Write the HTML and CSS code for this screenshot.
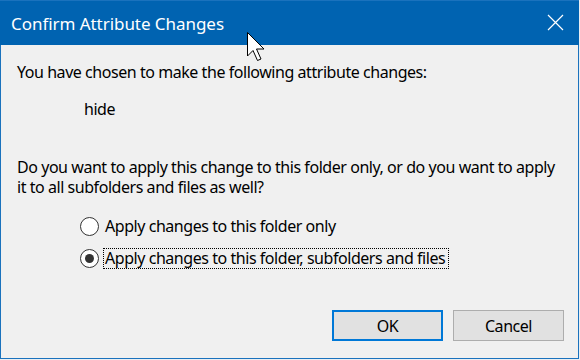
FILE: index.html
```html
<!DOCTYPE html>
<html>
<head>
<meta charset="utf-8">
<link rel="stylesheet" href="styles.css">
</head>
<body>
<div class="window">
  <div class="titlebar">
    <span class="title">Confirm Attribute Changes</span>
    <span class="close">
      <svg width="17" height="17" viewBox="0 0 17 17"><path d="M1 1 L16 16 M16 1 L1 16" stroke="#ffffff" stroke-width="1.2" fill="none"/></svg>
    </span>
  </div>
  <div class="content">
    <p class="line first">You have chosen to make the following attribute changes:</p>
    <p class="line attr">hide</p>
    <p class="line question">Do you want to apply this change to this folder only, or do you want to apply<br>it to all subfolders and files as well?</p>
    <div class="options">
      <div class="option">
        <span class="radio"></span>
        <span class="label">Apply changes to this folder only</span>
      </div>
      <div class="option">
        <span class="radio checked"><span class="dot"></span></span>
        <span class="label focused">Apply changes to this folder, subfolders and files</span>
      </div>
    </div>
    <div class="buttons">
      <button class="btn default">OK</button>
      <button class="btn">Cancel</button>
    </div>
  </div>
  <svg class="cursor" width="20" height="30" viewBox="0 0 20 30"><path d="M0.5 0.5 L0.5 24 L6 18.5 L10.5 28.5 L14 27 L9.5 17 L17 17 Z" fill="#ffffff" stroke="#000000" stroke-width="1" stroke-linejoin="miter"/></svg>
</div>
</body>
</html>
```
FILE: styles.css
```css
html, body {
  margin: 0;
  padding: 0;
  background: #e9eef3;
}
body {
  width: 580px;
  height: 360px;
  overflow: hidden;
  font-family: "Noto Sans", "Open Sans", sans-serif;
}
.window {
  position: relative;
  width: 577px;
  height: 358px;
  border: 1px solid #1a72bd;
  border-top: none;
  background: #f0f0f0;
  display: flex;
  flex-direction: column;
}
.titlebar {
  height: 45px;
  background: #0063b1;
  display: flex;
  align-items: center;
  justify-content: space-between;
  padding: 0 15px 0 11px;
  margin: 0 -1px;
  border-top: 1px solid #1a72bd;
  box-sizing: border-box;
}
.title {
  color: #ffffff;
  font-size: 17px;
  letter-spacing: -0.05px;
  line-height: 24px;
  padding-top: 2px;
}
.close {
  display: flex;
  margin-top: -1px;
}
.content {
  padding: 17px 0 0 16px;
  display: flex;
  flex-direction: column;
  color: #000000;
  font-size: 16px;
  letter-spacing: -0.45px;
}
.line {
  margin: 0;
  line-height: 20px;
  white-space: nowrap;
}
.attr {
  margin-top: 17px;
  margin-left: 67px;
}
.question {
  margin-top: 38px;
}
.options {
  margin-top: 19px;
  margin-left: 63px;
  display: flex;
  flex-direction: column;
  gap: 11px;
}
.option {
  display: flex;
  align-items: center;
  height: 21px;
}
.radio {
  width: 17px;
  height: 17px;
  border: 1px solid #333333;
  border-radius: 50%;
  background: #ffffff;
  display: flex;
  align-items: center;
  justify-content: center;
  margin-right: 4px;
}
.dot {
  width: 9px;
  height: 9px;
  border-radius: 50%;
  background: #333333;
}
.label {
  line-height: 19px;
  border: 1px dotted transparent;
  padding: 0 3px 0 1px;
  white-space: nowrap;
}
.label.focused {
  border-color: #000000;
}
.buttons {
  margin-top: 41px;
  margin-right: 14px;
  display: flex;
  justify-content: flex-end;
  gap: 10px;
}
.btn {
  width: 111px;
  height: 31px;
  box-sizing: border-box;
  background: #e1e1e1;
  border: 1px solid #adadad;
  font-family: "Noto Sans", "Open Sans", sans-serif;
  font-size: 16px;
  letter-spacing: -0.45px;
  color: #000000;
  padding: 0;
  margin: 0;
}
.btn.default {
  border: 2px solid #0078d7;
}
.cursor {
  position: absolute;
  left: 246px;
  top: 32px;
}
```
